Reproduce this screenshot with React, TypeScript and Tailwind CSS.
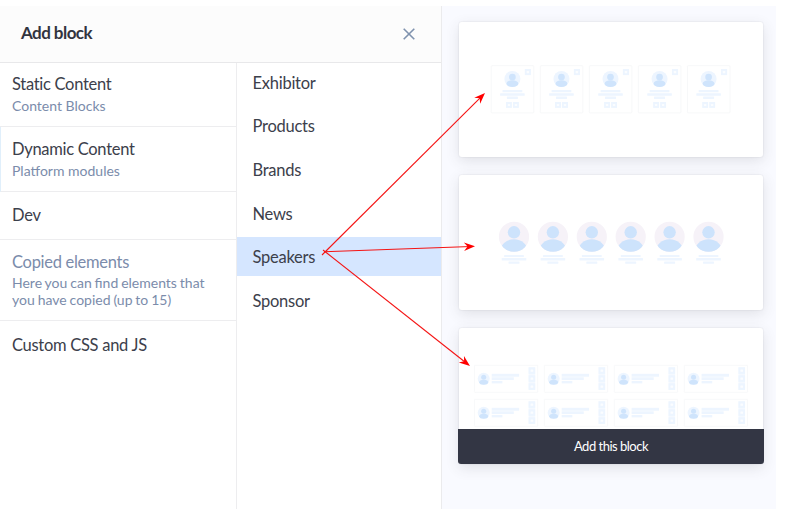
import React from "react";

type Entry = { title: string; note?: string; muted?: boolean; active?: boolean; size: string };

const sections: Entry[] = [
  { title: "Static Content", note: "Content Blocks", size: "h-16 pt-[10px]" },
  { title: "Dynamic Content", note: "Platform modules", active: true, size: "h-[65px] pt-[11px]" },
  { title: "Dev", size: "h-12 pt-[12px]" },
  {
    title: "Copied elements",
    note: "Here you can find elements that you have copied (up to 15)",
    muted: true,
    size: "h-[81px] pt-[11px]",
  },
  { title: "Custom CSS and JS", size: "h-[60px] pt-[13px] border-b-0" },
];

const modules = ["Exhibitor", "Products", "Brands", "News", "Speakers", "Sponsor"];

function Badge({ x, y, s }: { x: number; y: number; s: number }) {
  return (
    <g>
      <rect x={x} y={y} width={s} height={s} fill="#edf5ff" />
      <rect x={x + s * 0.3} y={y + s * 0.32} width={s * 0.4} height={s * 0.36} rx="0.6" fill="#fbfdff" />
    </g>
  );
}

function Avatar({ x, y, r }: { x: number; y: number; r: number }) {
  return (
    <g>
      <circle cx={x} cy={y} r={r} fill="#edf5ff" />
      <circle cx={x} cy={y - r * 0.25} r={r * 0.42} fill="#cfe4fc" />
      <ellipse cx={x} cy={y + r * 0.58} rx={r * 0.74} ry={r * 0.42} fill="#cfe4fc" />
    </g>
  );
}

function Lines({ x, y }: { x: number; y: number }) {
  return (
    <g fill="#edf5ff">
      <rect x={x - 9.9} y={y} width="19.8" height="2.2" rx="0.5" />
      <rect x={x - 12.3} y={y + 3.1} width="24.6" height="2.5" rx="0.5" />
      <rect x={x - 5.5} y={y + 6.5} width="11" height="2.4" rx="0.5" />
    </g>
  );
}

function CardsPreview() {
  return (
    <svg className="block" width="304" height="135" viewBox="459 22 304 135">
      {[0, 1, 2, 3, 4].map((i) => {
        const x = 512.4 + i * 49.05;
        return (
          <g key={i}>
            <rect x={x - 21.2} y="65.7" width="42.6" height="47.2" rx="1" fill="#fff" stroke="#f7f8f9" />
            <Badge x={x + 12.4} y={69} s={6.1} />
            <Avatar x={x} y={79} r={8} />
            <Lines x={x} y={90.1} />
            <Badge x={x - 6.4} y={102} s={5.9} />
            <Badge x={x + 0.6} y={102} s={5.9} />
          </g>
        );
      })}
    </svg>
  );
}

function PeoplePreview() {
  return (
    <svg className="block" width="304" height="135" viewBox="459 175 304 135">
      {[0, 1, 2, 3, 4, 5].map((i) => {
        const x = 514 + i * 38.9;
        return (
          <g key={i}>
            <clipPath id={`person-${i}`}>
              <circle cx={x} cy="236.8" r="15" />
            </clipPath>
            <circle cx={x} cy="236.8" r="15.1" fill="#f6f2f8" />
            <circle cx={x} cy="232.3" r="6.2" fill="#cde3fc" />
            <ellipse cx={x} cy="251.8" rx="14" ry="12.6" fill="#cde3fc" clipPath={`url(#person-${i})`} />
            <Lines x={x} y={254.9} />
          </g>
        );
      })}
    </svg>
  );
}

function RowsPreview() {
  return (
    <svg className="block" width="304" height="101" viewBox="459 328 304 101">
      {[0, 1].map((row) =>
        [0, 1, 2, 3].map((col) => (
          <g key={`${row}-${col}`} transform={`translate(${col * 69.95} ${row * 34})`}>
            <rect x="474.4" y="365.3" width="63.3" height="27" rx="0.5" fill="#fff" stroke="#f8f9fa" />
            <Avatar x={483.7} y={378.7} r={6} />
            <g fill="#edf5ff">
              <rect x="491.7" y="373.8" width="27.4" height="2.9" />
              <rect x="491.7" y="377.3" width="22.1" height="2.7" />
              <rect x="491.7" y="381" width="10.7" height="2.4" />
            </g>
            <rect x="528.6" y="367.3" width="6.6" height="22.6" fill="#f5f9ff" />
            <Badge x={528.6} y={367.3} s={6.6} />
            <Badge x={528.6} y={375.3} s={6.6} />
            <Badge x={528.6} y={383.3} s={6.6} />
          </g>
        ))
      )}
    </svg>
  );
}

const cardClass =
  "w-[304px] rounded-[3px] bg-white shadow-[0_0_1px_1px_rgba(60,60,60,0.04),0_4px_14px_rgba(60,60,70,0.13)]";

// Each arrow ends at its "to" point with its head rotated along the line.
const arrows = [
  { from: [322, 255], to: [485, 93] },
  { from: [324, 251.7], to: [475, 246.3] },
  { from: [323, 250], to: [470, 366] },
];

export default function App() {
  return (
    <div className="relative h-[509px] w-[787px] overflow-hidden bg-white pt-[6px] font-[Lato,sans-serif] text-[#3c404b]">
      <div className="flex h-[503px] w-[776px] bg-[#f9faff]">
        <div className="flex w-[442px] flex-col border-r border-[#ebebed] bg-white">
          <header className="flex h-[57px] items-center justify-between border-b border-[#e8e8ea] bg-[#fcfcfc] pl-[21px] pr-[26px]">
            <h1 className="-mt-[3px] text-[17px] font-bold leading-5 tracking-[-0.55px] text-[#32343f]">Add block</h1>
            <svg className="-mt-px" width="12" height="12" viewBox="0 0 12 12" fill="none" stroke="#7f92ae" strokeWidth="1.6">
              <path d="M0.7 0.7 11.3 11.3M11.3 0.7 0.7 11.3" />
            </svg>
          </header>
          <div className="flex flex-1">
            <nav className="w-[237px] border-r border-[#ededef]">
              {sections.map((s) => (
                <div
                  key={s.title}
                  className={`border-b border-b-[#ededef] pr-5 ${s.size} ${
                    s.active ? "border-l border-l-[#e0effb] pl-[11px]" : "pl-3"
                  }`}
                >
                  <div className={`text-[16.5px] leading-[22px] tracking-[-0.29px] ${s.muted ? "text-[#7b8cab]" : ""}`}>
                    {s.title}
                  </div>
                  {s.note && (
                    <div
                      className={`mt-[2px] text-[14px] text-[#7b8cab] ${
                        s.muted ? "leading-[16.5px] [word-spacing:-0.7px]" : "leading-[17px]"
                      }`}
                    >
                      {s.note}
                    </div>
                  )}
                </div>
              ))}
            </nav>
            <ul className="-mt-px flex-1">
              {modules.map((m) => (
                <li
                  key={m}
                  className={`mb-[4.7px] flex h-[39px] items-center pl-[15.5px] pt-[2px] text-[16.5px] leading-[22px] tracking-[-0.25px] ${
                    m === "Speakers" ? "bg-[#d5e6ff]" : ""
                  }`}
                >
                  {m}
                </li>
              ))}
            </ul>
          </div>
        </div>
        <main className="flex flex-col gap-[18px] pl-[17px] pt-4">
          <div className={cardClass}>
            <CardsPreview />
          </div>
          <div className={cardClass}>
            <PeoplePreview />
          </div>
          <div className={cardClass}>
            <RowsPreview />
            <button className="-mx-px flex h-[35px] w-[306px] items-center justify-center rounded-b-[3px] bg-[#333644] text-[13px] tracking-[-0.5px] text-white">
              Add this block
            </button>
          </div>
        </main>
      </div>
      <svg className="pointer-events-none absolute left-0 top-0" width="787" height="509" stroke="#f51414" fill="#f00">
        {arrows.map(({ from, to }) => {
          const angle = (Math.atan2(to[1] - from[1], to[0] - from[0]) * 180) / Math.PI;
          const length = Math.hypot(to[0] - from[0], to[1] - from[1]);
          return (
            <g key={to[0]} transform={`translate(${to[0]} ${to[1]}) rotate(${angle})`}>
              <path d={`M${-length} 0H-4`} strokeWidth="1.1" />
              <path d="M0 0-11-4.2-7.5 0-11 4.2Z" stroke="none" />
            </g>
          );
        })}
      </svg>
    </div>
  );
}
